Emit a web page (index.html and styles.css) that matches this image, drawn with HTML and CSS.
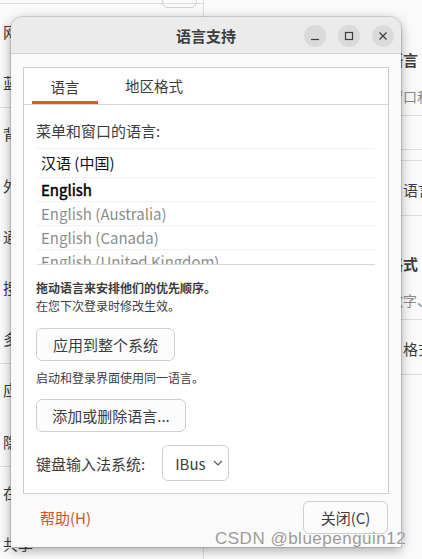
FILE: index.html
```html
<!DOCTYPE html>
<html lang="zh-CN">
<head>
  <meta charset="UTF-8" />
  <meta name="viewport" content="width=device-width, initial-scale=1" />
  <title>语言支持</title>
  <link rel="stylesheet" href="styles.css">
</head>
<body>
  <div class="settings">
    <aside class="sidebar">
      <div class="sidebar-top"><span class="top-btn"></span></div>
      <ul class="side-list">
        <li>网络</li>
        <li class="sep">蓝牙</li>
        <li>背景</li>
        <li>外观</li>
        <li>通知</li>
        <li>搜索</li>
        <li class="sep">多任务</li>
        <li>应用</li>
        <li class="sep">隐私</li>
        <li>在线账户</li>
        <li>共享</li>
      </ul>
    </aside>
    <section class="panel">
      <h3 class="panel-title first">语言</h3>
      <p class="panel-sub">窗口和菜单的语言</p>
      <div class="panel-box small"></div>
      <div class="panel-box"><div class="panel-row">语言</div></div>
      <h3 class="panel-title">格式</h3>
      <p class="panel-sub">数字、日期和货币</p>
      <div class="panel-box"><div class="panel-row">格式</div></div>
    </section>
  </div>

  <div class="dialog">
    <header class="titlebar">
      <div class="title">语言支持</div>
      <div class="win-buttons">
        <span class="win-btn">
          <svg width="10" height="10" viewBox="0 0 10 10"><path d="M1 8.5h8" stroke="#3d3d3d" stroke-width="1.2"/></svg>
        </span>
        <span class="win-btn">
          <svg width="10" height="10" viewBox="0 0 10 10"><rect x="1.5" y="1.5" width="7" height="7" fill="none" stroke="#3d3d3d" stroke-width="1.2"/></svg>
        </span>
        <span class="win-btn">
          <svg width="10" height="10" viewBox="0 0 10 10"><path d="M1.5 1.5l7 7M8.5 1.5l-7 7" stroke="#3d3d3d" stroke-width="1.2"/></svg>
        </span>
      </div>
    </header>

    <div class="dialog-body">
      <div class="notebook">
        <div class="tabs">
          <div class="tab active">语言</div>
          <div class="tab">地区格式</div>
        </div>
        <div class="tab-page">
          <div class="label">菜单和窗口的语言:</div>
          <ul class="lang-list">
            <li class="main">汉语 (中国)</li>
            <li class="main medium">English</li>
            <li>English (Australia)</li>
            <li>English (Canada)</li>
            <li>English (United Kingdom)</li>
          </ul>
          <div class="hint bold">拖动语言来安排他们的优先顺序。</div>
          <div class="hint">在您下次登录时修改生效。</div>
          <button class="btn btn-apply">应用到整个系统</button>
          <div class="hint hint-gap">启动和登录界面使用同一语言。</div>
          <button class="btn btn-add">添加或删除语言...</button>
          <div class="input-row">
            <span>键盘输入法系统:</span>
            <div class="combo">
              IBus
              <svg width="10" height="6" viewBox="0 0 10 6"><path d="M1 1l4 4 4-4" fill="none" stroke="#555" stroke-width="1.1"/></svg>
            </div>
          </div>
        </div>
      </div>
      <footer class="dialog-footer">
        <a class="help">帮助(H)</a>
        <button class="btn btn-close">关闭(C)</button>
      </footer>
    </div>
  </div>

  <div class="watermark">CSDN @bluepenguin12</div>
</body>
</html>
```

FILE: styles.css
```css
 body {
   font-family: "Noto Sans CJK SC", "Noto Sans", sans-serif;
   background-color: #fafafa;
   margin: 0; padding: 0;
   color: #3d3d3d;
   width: 422px;
   height: 559px;
   overflow: hidden;
   position: relative;
 }

 /* settings window behind the dialog */
 .settings {
   display: flex;
   height: 559px;
 }
 .sidebar {
   width: 203px;
   border-right: 1px solid #dcdcdc;
 }
 .sidebar-top {
   height: 13px;
   border-bottom: 1px solid #dcdcdc;
 }
 .top-btn {
   display: block;
   margin: -10px 0 0 162px;
   width: 33px;
   height: 16px;
   border: 1px solid #d0d0d0;
   border-radius: 6px;
 }
 .side-list {
   list-style: none;
   margin: 0;
   padding: 2px 0 0;
 }
 .side-list li {
   height: 51.2px;
   line-height: 51px;
   padding-left: 3px;
   font-size: 15px;
   color: #3c3c3c;
   box-sizing: border-box;
 }
 .side-list li.sep {
   border-bottom: 1px solid #dcdcdc;
 }
 .panel {
   flex: 1;
   min-width: 0;
   overflow: hidden;
   padding-left: 184px;
 }
 .panel-title {
   margin: 0;
   font-size: 15px;
   line-height: 20px;
   font-weight: bold;
 }
 .panel-title.first { margin-top: 50px; }
 .panel-title:not(.first) { margin-top: 38px; }
 .panel-sub {
   margin: 17px 0 0;
   font-size: 14px;
   line-height: 18px;
   color: #8a8a8a;
   white-space: nowrap;
   margin-left: 1px;
 }
 .panel-box {
   border-top: 1px solid #dcdcdc;
   border-bottom: 1px solid #dcdcdc;
   margin-top: 10px;
 }
 .panel-box.small { height: 33px; }
 .panel-row {
   height: 54px;
   line-height: 58px;
   padding-left: 15px;
   font-size: 15px;
   white-space: nowrap;
 }

 /* dialog */
 .dialog {
   position: absolute;
   left: 11px;
   top: 17px;
   width: 390px;
   height: 530px;
   background: #fafafa;
   border-radius: 12px 12px 0 0;
   box-shadow: 0 0 0 1px rgba(0,0,0,0.12), 0 3px 12px rgba(0,0,0,0.35);
   display: flex;
   flex-direction: column;
 }
 .titlebar {
   height: 36px;
   border-bottom: 1px solid #d2d2d2;
   background: #ebebeb;
   border-radius: 12px 12px 0 0;
   display: flex;
   align-items: center;
   justify-content: center;
   position: relative;
 }
 .title {
   font-size: 15px;
   font-weight: bold;
   color: #3d3d3d;
 }
 .win-buttons {
   position: absolute;
   right: 7px;
   top: 8px;
   display: flex;
   gap: 12px;
 }
 .win-btn {
   width: 22px;
   height: 22px;
   border-radius: 50%;
   background: #dadada;
   display: flex;
   align-items: center;
   justify-content: center;
 }

 .dialog-body {
   padding: 13px 12px 0;
 }
 .notebook {
   border: 1px solid #cdcdcd;
   background: #ffffff;
 }
 .tabs {
   display: flex;
   height: 36px;
   border-bottom: 1px solid #d6d6d6;
 }
 .tab {
   margin-left: 9px;
   padding: 0 18px;
   font-size: 14.5px;
   line-height: 36px;
   color: #3d3d3d;
   box-sizing: border-box;
 }
 .tab.active {
   margin-left: 8px;
   width: 66px;
   padding: 0;
   text-align: center;
   border-bottom: 3px solid #e95420;
   line-height: 37px;
 }
 .tab-page {
   padding: 0 13px 12px;
 }
 .label {
   margin-top: 16px;
   font-size: 15px;
   line-height: 20px;
   margin-left: -1px;
 }
 .lang-list {
   list-style: none;
   margin: 7px 0 0;
   padding: 0;
   height: 115px;
   overflow: hidden;
   border-top: 1px solid #f0f0f0;
   border-bottom: 1px solid #d6d6d6;
 }
 .lang-list li {
   height: 23px;
   line-height: 23px;
   padding-left: 4px;
   font-size: 15px;
   color: #8d8d8d;
   border-bottom: 1px solid #f0f0f0;
 }
 .lang-list li:first-child {
   height: 28px;
   line-height: 28px;
 }
 .lang-list li.main { color: #111; }
 .lang-list li.medium {
   color: #000;
   -webkit-text-stroke: 0.45px #000;
 }
 .bold { font-weight: bold; }
 .hint {
   font-size: 12px;
   line-height: 18px;
   margin-left: -1px;
 }
 .hint.bold { margin-top: 14px; }
 .hint-gap { margin-top: 8px; }
 .btn {
   font-family: inherit;
   font-size: 15px;
   color: #3d3d3d;
   background: #fcfcfc;
   border: 1px solid #cfcfcf;
   border-radius: 6px;
   height: 33px;
   cursor: pointer;
   display: block;
 }
 .btn-apply {
   margin: 13px 0 0 -1px;
   width: 139px;
 }
 .btn-add {
   margin: 12px 0 0 -1px;
   width: 150px;
 }
 .input-row {
   margin-top: 13px;
   display: flex;
   align-items: center;
   font-size: 15px;
   margin-left: -1px;
 }
 .combo {
   margin-left: 17px;
   width: 67px;
   height: 36px;
   box-sizing: border-box;
   border: 1px solid #cfcfcf;
   border-radius: 6px;
   display: flex;
   align-items: center;
   padding-left: 12px;
   gap: 7px;
 }

 .dialog-footer {
   display: flex;
   justify-content: space-between;
   align-items: center;
   margin-top: 7px;
 }
 .help {
   color: #d8521f;
   font-size: 15px;
   padding-left: 17px;
   cursor: pointer;
 }
 .btn-close {
   width: 85px;
   margin-right: 1px;
 }

 .watermark {
   position: absolute;
   left: 215px;
   top: 529px;
   font-family: "Liberation Sans", Arial, sans-serif;
   font-size: 17px;
   color: #9a9a9a;
   text-shadow: 0 0 1px #fff, 0 0 1px #fff;
   letter-spacing: 0.5px;
 }
```
